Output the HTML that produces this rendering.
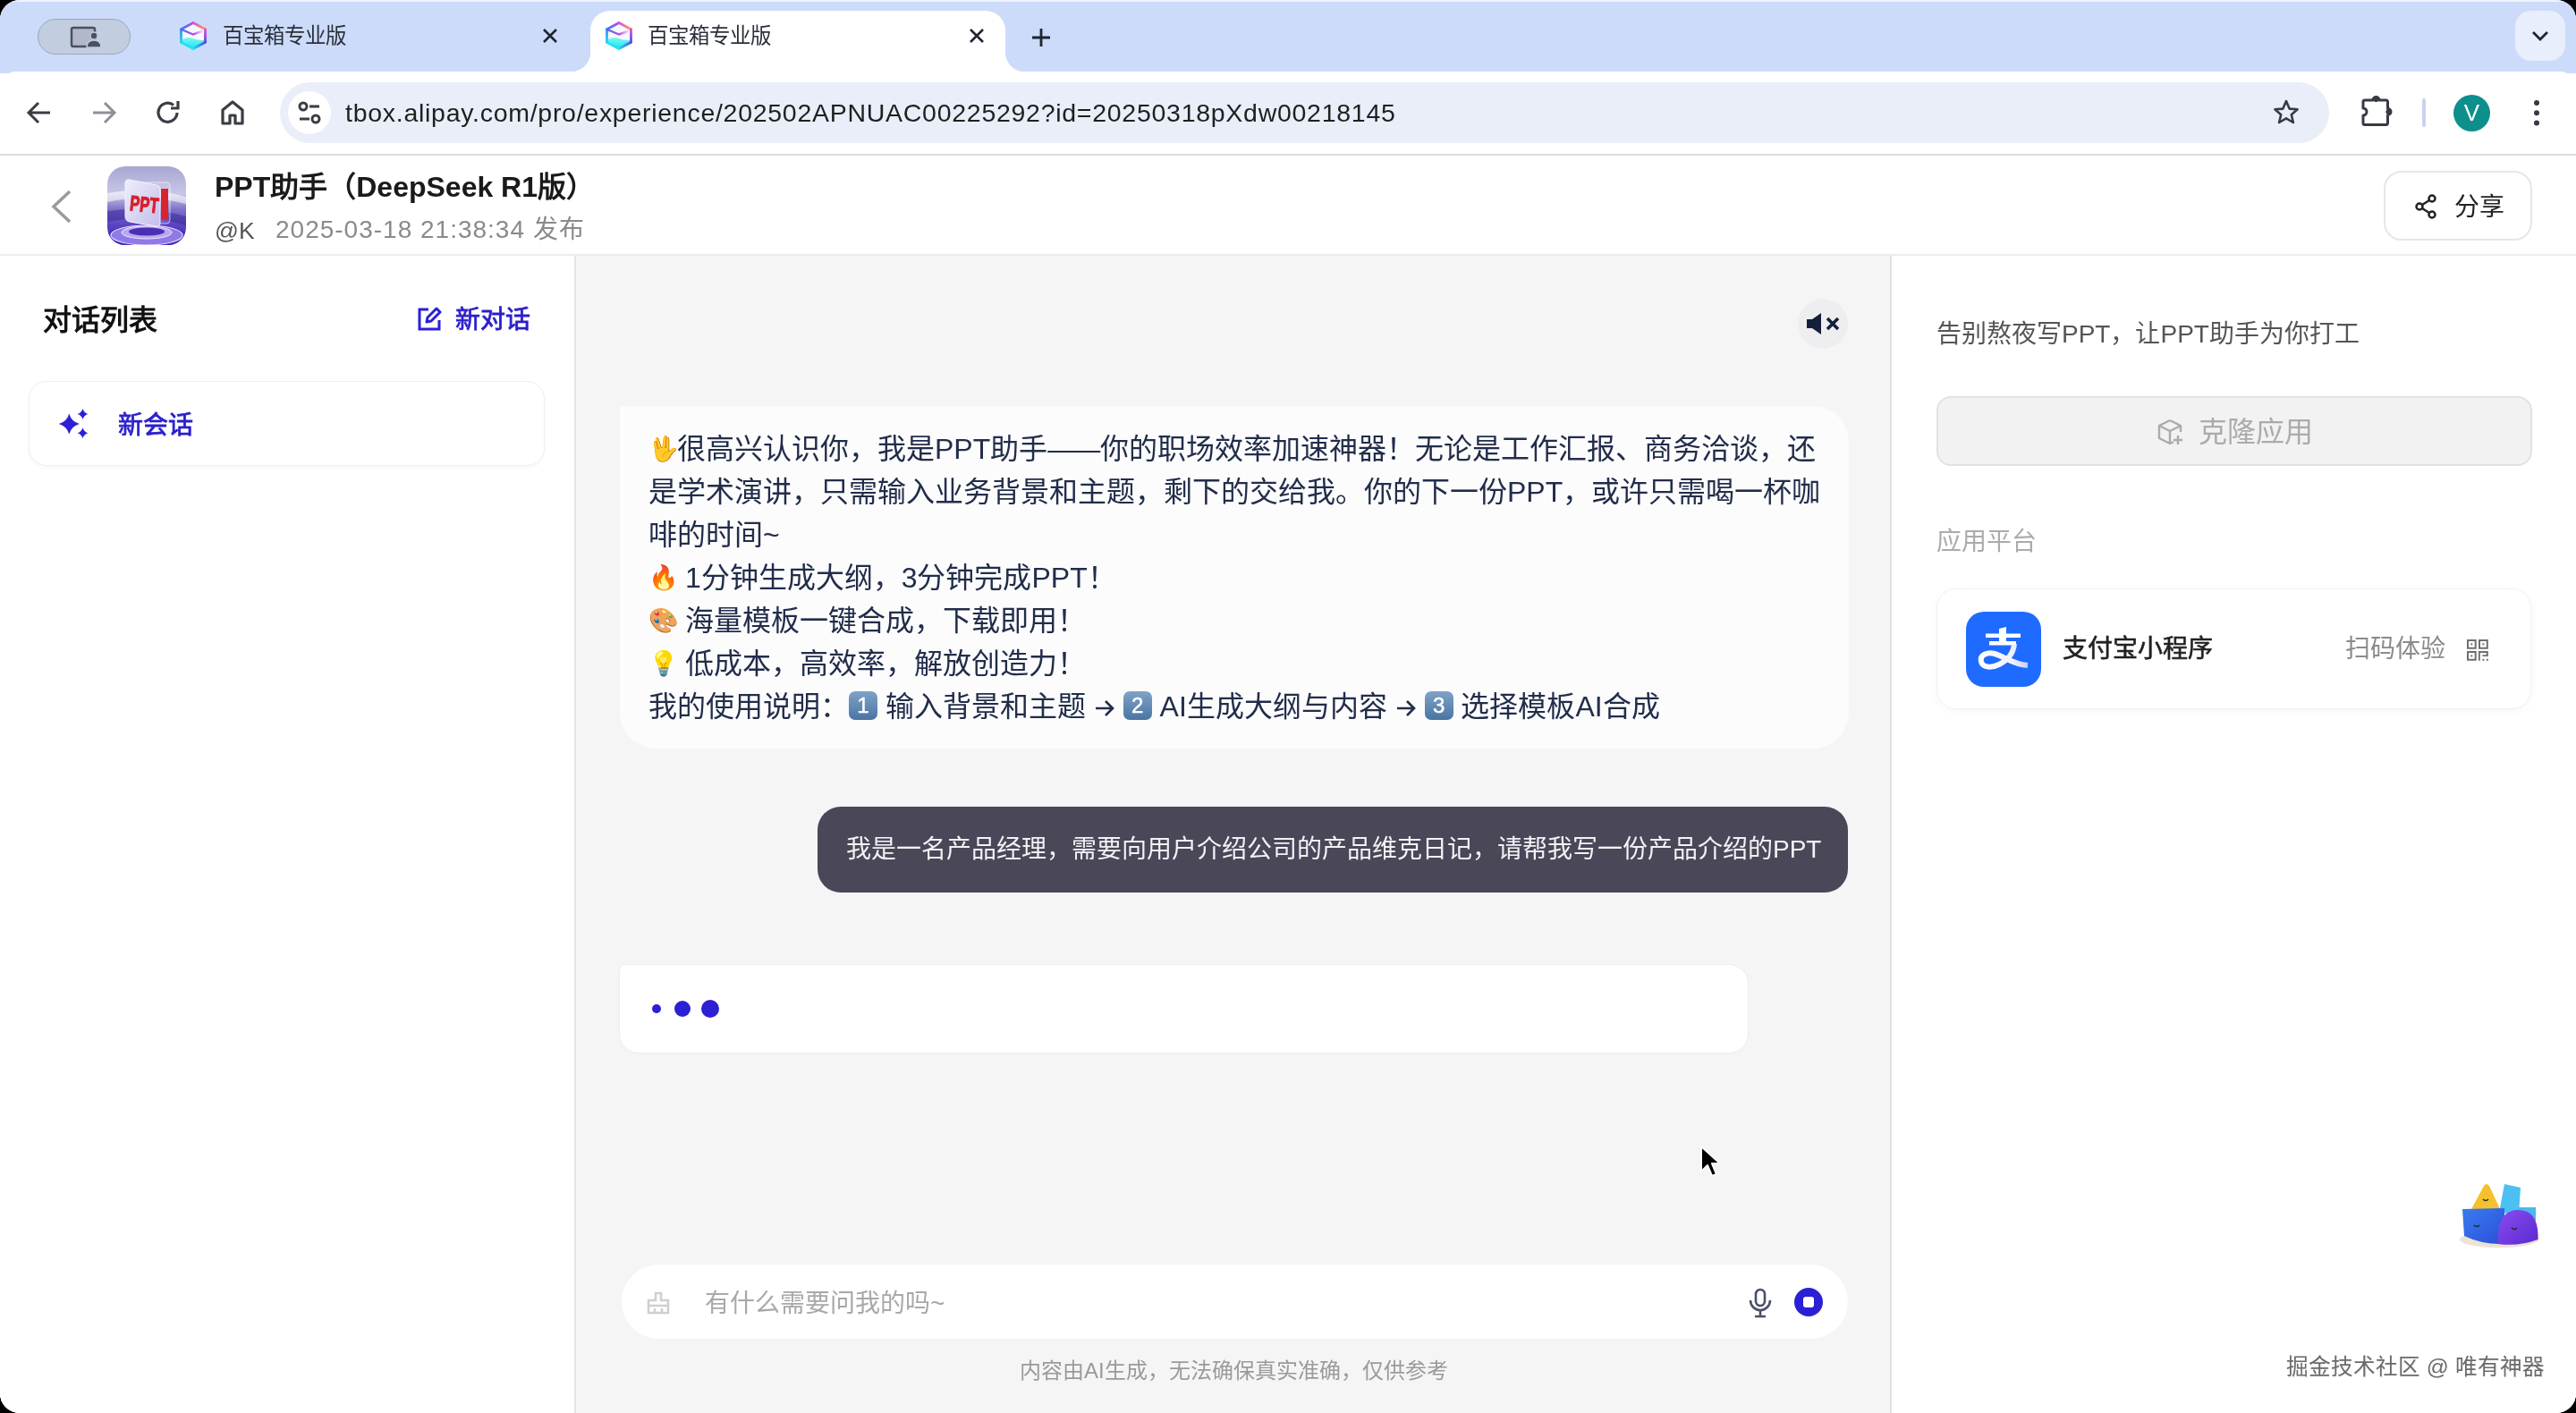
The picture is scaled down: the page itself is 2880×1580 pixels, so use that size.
<!DOCTYPE html>
<html lang="zh-CN"><head><meta charset="utf-8">
<style>
*{box-sizing:border-box;margin:0;padding:0}
html,body{width:2880px;height:1580px;overflow:hidden;background:#000}
body{font-family:"Liberation Sans",sans-serif;position:relative}
.a{position:absolute}
#win{will-change:transform;position:absolute;left:0;top:0;width:2880px;height:1580px;border-radius:22px;overflow:hidden;background:#fff}
#tabbar{position:absolute;left:0;top:0;width:2880px;height:82px;background:#cddbfa;border-top:2px solid #eef3fd}
#toolbar{position:absolute;left:0;top:80px;width:2880px;height:94px;background:#fff;border-radius:18px 18px 0 0;border-bottom:2px solid #dcdcdc}
.tabtxt{font-size:23.5px;color:#2a2f3a;white-space:nowrap;line-height:24px}
#page{position:absolute;left:0;top:174px;width:2880px;height:1406px;background:#fff}
#header{position:absolute;left:0;top:0;width:2880px;height:112px;border-bottom:2px solid #ececec;background:#fff}
#side{position:absolute;left:0;top:112px;width:644px;height:1294px;background:#fff;border-right:2px solid #e4e4e4}
#chat{position:absolute;left:644px;top:112px;width:1471px;height:1294px;background:#f5f5f5;border-right:2px solid #e0e0e0}
#right{position:absolute;left:2116px;top:112px;width:764px;height:1294px;background:#fff}
.em{font-size:27px;display:inline-block;width:32px;text-align:center;vertical-align:top}
.dash{letter-spacing:-5px;margin-right:5px}
.kc{display:inline-block;width:32px;height:32px;border-radius:7px;background:linear-gradient(180deg,#7fa3c8,#4a74a2);color:#fff;font-size:24px;line-height:32px;text-align:center;-webkit-text-stroke:0.5px #fff;vertical-align:4px}
.ar{vertical-align:-1px}
</style></head><body>
<div id="win">
  <div id="tabbar">
    <!-- profile pill -->
    <div class="a" style="left:42px;top:19px;width:104px;height:40px;border-radius:20px;background:#c3cde0;border:1.5px solid #9aa6bb"></div>
    <svg class="a" style="left:78px;top:27px" width="36" height="26" viewBox="0 0 36 26">
      <rect x="2" y="2" width="26" height="21" rx="2" fill="#b0b8c9" stroke="#4a5060" stroke-width="2.5"/>
      <circle cx="27" cy="11" r="4" fill="#4a5060" stroke="#c3cde0" stroke-width="1.5"/>
      <path d="M19 24 Q19 16 27 16 Q35 16 35 24 Z" fill="#4a5060" stroke="#c3cde0" stroke-width="1.5"/>
    </svg>
    <!-- tab 1 -->
    <svg class="a" style="left:200px;top:22px" width="32" height="32" viewBox="0 0 32 32"><defs>
      <linearGradient id="e1" gradientUnits="userSpaceOnUse" x1="2" y1="8.5" x2="16" y2="1"><stop offset="0" stop-color="#3f7cf0"/><stop offset="1" stop-color="#b34ce8"/></linearGradient>
      <linearGradient id="e2" gradientUnits="userSpaceOnUse" x1="16" y1="1" x2="30" y2="8.5"><stop offset="0" stop-color="#d84ce6"/><stop offset="1" stop-color="#ffa23a"/></linearGradient>
      <linearGradient id="e3" gradientUnits="userSpaceOnUse" x1="30" y1="8.5" x2="30" y2="23.5"><stop offset="0" stop-color="#e84cd8"/><stop offset="1" stop-color="#4a4ee6"/></linearGradient>
      <linearGradient id="e4" gradientUnits="userSpaceOnUse" x1="30" y1="23.5" x2="16" y2="31"><stop offset="0" stop-color="#4a4ee6"/><stop offset="1" stop-color="#18dcf2"/></linearGradient>
      <linearGradient id="e5" gradientUnits="userSpaceOnUse" x1="2" y1="8.5" x2="2" y2="23.5"><stop offset="0" stop-color="#3a8af0"/><stop offset="1" stop-color="#22d8f0"/></linearGradient>
      <linearGradient id="vl" gradientUnits="userSpaceOnUse" x1="2" y1="8" x2="27" y2="11"><stop offset="0" stop-color="#3f6ff0"/><stop offset=".6" stop-color="#b84ce8"/><stop offset="1" stop-color="#ffe0f0"/></linearGradient>
      <linearGradient id="cy" x1="0" y1="0" x2="0" y2="1"><stop offset="0" stop-color="#7ff8f0"/><stop offset="1" stop-color="#18e2f4"/></linearGradient>
    </defs>
      <path d="M16 1.5L30 9V23L16 30.5L2 23V9Z" fill="#f6f8ff"/>
      <path d="M2 21Q9 16 16 19Q23 22 30 20.5V23L16 30.5L2 23Z" fill="url(#cy)"/>
      <g fill="none" stroke-width="2.8" stroke-linecap="round">
        <path d="M2.5 8.8L16 1.6" stroke="url(#e1)"/><path d="M16 1.6L29.5 8.8" stroke="url(#e2)"/><path d="M29.5 8.8V23.2" stroke="url(#e3)"/>
        <path d="M29.5 23.2L16 30.4" stroke="url(#e4)"/><path d="M16 30.4L2.5 23.2" stroke="#1ee4ee"/><path d="M2.5 8.8V23.2" stroke="url(#e5)"/>
        <path d="M3 9L16 14.5L26 11" stroke="url(#vl)" stroke-width="2.4"/>
      </g>
    </svg>
    <div class="a tabtxt" style="left:249px;top:26px">百宝箱专业版</div>
    <svg class="a" style="left:605px;top:28px" width="20" height="20" viewBox="0 0 20 20"><path d="M3 3L17 17M17 3L3 17" stroke="#1f2430" stroke-width="2.6"/></svg>
    <!-- active tab -->
    <div class="a" style="left:660px;top:10px;width:464px;height:72px;background:#fff;border-radius:22px 22px 0 0"></div>
    <div class="a" style="left:638px;top:56px;width:22px;height:22px;background:radial-gradient(circle at 0 0,transparent 22px,#fff 22.5px)"></div>
    <div class="a" style="left:1124px;top:56px;width:22px;height:22px;background:radial-gradient(circle at 100% 0,transparent 22px,#fff 22.5px)"></div>
    <svg class="a" style="left:676px;top:22px" width="32" height="32" viewBox="0 0 32 32">
      <path d="M16 1.5L30 9V23L16 30.5L2 23V9Z" fill="#f6f8ff"/>
      <path d="M2 21Q9 16 16 19Q23 22 30 20.5V23L16 30.5L2 23Z" fill="url(#cy)"/>
      <g fill="none" stroke-width="2.8" stroke-linecap="round">
        <path d="M2.5 8.8L16 1.6" stroke="url(#e1)"/><path d="M16 1.6L29.5 8.8" stroke="url(#e2)"/><path d="M29.5 8.8V23.2" stroke="url(#e3)"/>
        <path d="M29.5 23.2L16 30.4" stroke="url(#e4)"/><path d="M16 30.4L2.5 23.2" stroke="#1ee4ee"/><path d="M2.5 8.8V23.2" stroke="url(#e5)"/>
        <path d="M3 9L16 14.5L26 11" stroke="url(#vl)" stroke-width="2.4"/>
      </g>
    </svg>
    <div class="a tabtxt" style="left:724px;top:26px">百宝箱专业版</div>
    <svg class="a" style="left:1082px;top:28px" width="20" height="20" viewBox="0 0 20 20"><path d="M3 3L17 17M17 3L3 17" stroke="#1f2430" stroke-width="2.6"/></svg>
    <svg class="a" style="left:1152px;top:28px" width="24" height="24" viewBox="0 0 24 24"><path d="M12 2V22M2 12H22" stroke="#1f2430" stroke-width="2.8"/></svg>
    <!-- dropdown -->
    <div class="a" style="left:2812px;top:10px;width:56px;height:56px;border-radius:18px;background:#e8eefc"></div>
    <svg class="a" style="left:2830px;top:30px" width="20" height="16" viewBox="0 0 20 16"><path d="M2 4L10 12L18 4" fill="none" stroke="#1f2430" stroke-width="2.8"/></svg>
  </div>

  <div id="toolbar">
    <!-- back -->
    <svg class="a" style="left:28px;top:30px" width="32" height="32" viewBox="0 0 32 32"><path d="M28 16H5M15 5L4 16L15 27" fill="none" stroke="#3a3d44" stroke-width="3"/></svg>
    <svg class="a" style="left:100px;top:30px" width="32" height="32" viewBox="0 0 32 32"><path d="M4 16H27M17 5L28 16L17 27" fill="none" stroke="#8d9097" stroke-width="3"/></svg>
    <svg class="a" style="left:172px;top:30px" width="32" height="32" viewBox="0 0 32 32"><path d="M26 16A10.5 10.5 0 1 1 22 7.5" fill="none" stroke="#3a3d44" stroke-width="3.2"/><path d="M27 3V11H19" fill="none" stroke="#3a3d44" stroke-width="3.2"/></svg>
    <svg class="a" style="left:244px;top:30px" width="32" height="32" viewBox="0 0 32 32"><path d="M5 28V13L16 4L27 13V28H19V19H13V28Z" fill="none" stroke="#3a3d44" stroke-width="3.2" stroke-linejoin="round"/></svg>
    <!-- address bar -->
    <div class="a" style="left:313px;top:12px;width:2291px;height:68px;border-radius:34px;background:#e9eef8"></div>
    <div class="a" style="left:322px;top:22px;width:48px;height:48px;border-radius:24px;background:#fff"></div>
    <svg class="a" style="left:332px;top:32px" width="28" height="28" viewBox="0 0 28 28"><circle cx="7" cy="7" r="4" fill="none" stroke="#3a3d44" stroke-width="3"/><path d="M14 7H25" stroke="#3a3d44" stroke-width="3"/><circle cx="21" cy="21" r="4" fill="none" stroke="#3a3d44" stroke-width="3"/><path d="M3 21H14" stroke="#3a3d44" stroke-width="3"/></svg>
    <div class="a" style="left:386px;top:28px;font-size:28.5px;line-height:36px;color:#1f1f1f;white-space:nowrap;letter-spacing:0.72px">tbox.alipay.com/pro/experience/202502APNUAC00225292?id=20250318pXdw00218145</div>
    <svg class="a" style="left:2538px;top:28px" width="36" height="36" viewBox="0 0 36 36"><path d="M18 5L21.6 13.6L30.6 14.3L23.8 20.2L25.9 29L18 24.3L10.1 29L12.2 20.2L5.4 14.3L14.4 13.6Z" fill="none" stroke="#363a42" stroke-width="2.6" stroke-linejoin="round"/></svg>
    <svg class="a" style="left:2636px;top:24px" width="44" height="40" viewBox="0 0 44 40"><path d="M8 8H17A3.5 3.5 0 0 1 24 8H31.5Q33.5 8 33.5 10V17.5A3.5 3.5 0 0 1 33.5 24.5V33.5Q33.5 35.5 31.5 35.5H8Q6 35.5 6 33.5V25A4 4 0 0 0 6 17V10Q6 8 8 8Z" fill="none" stroke="#363a42" stroke-width="3" stroke-linejoin="round"/><circle cx="20.5" cy="7.5" r="2.6" fill="#363a42"/><circle cx="34" cy="21" r="2.6" fill="#363a42"/></svg>
    <div class="a" style="left:2708px;top:30px;width:3.5px;height:32px;background:#c7d3f0;border-radius:2px"></div>
    <div class="a" style="left:2743px;top:26px;width:41px;height:41px;border-radius:50%;background:#0e8f8b"></div>
    <div class="a" style="left:2743px;top:26px;width:41px;height:41px;line-height:41px;text-align:center;color:#fff;font-size:26px">V</div>
    <svg class="a" style="left:2828px;top:30px" width="16" height="34" viewBox="0 0 16 34"><circle cx="8" cy="5" r="3" fill="#363a42"/><circle cx="8" cy="16.2" r="3" fill="#363a42"/><circle cx="8" cy="27.4" r="3" fill="#363a42"/></svg>
  </div>

  <div id="page">
    <div id="header">
      <svg class="a" style="left:54px;top:37px" width="28" height="40" viewBox="0 0 28 40"><path d="M24 3L6 20L24 37" fill="none" stroke="#9a9a9a" stroke-width="3.5"/></svg>
      <svg class="a" style="left:120px;top:12px" width="88" height="88" viewBox="0 0 88 88">
        <defs>
          <clipPath id="ic"><rect width="88" height="88" rx="20"/></clipPath>
          <linearGradient id="icbg" x1="0" y1="0" x2="0" y2="1"><stop offset="0" stop-color="#a7a6d2"/><stop offset=".35" stop-color="#c9c7e6"/><stop offset=".55" stop-color="#7d72c8"/><stop offset=".75" stop-color="#5a42c0"/><stop offset="1" stop-color="#3a24a8"/></linearGradient>
          <linearGradient id="glass" x1="0" y1="0" x2="1" y2="1"><stop offset="0" stop-color="#efeefb"/><stop offset="1" stop-color="#c4bdeb"/></linearGradient>
        </defs>
        <g clip-path="url(#ic)">
          <rect width="88" height="88" fill="url(#icbg)"/>
          <path d="M0 30Q44 22 88 34V42Q44 30 0 40Z" fill="#fff" opacity=".55"/>
          <path d="M0 50Q44 44 88 56V66Q44 54 0 62Z" fill="#3c2a9c" opacity=".55"/>
          <ellipse cx="44" cy="82" rx="50" ry="16" fill="#4a2fc0"/>
          <ellipse cx="44" cy="77" rx="40" ry="11" fill="#8f7ae6" stroke="#e9e0ff" stroke-width="1.2"/>
          <ellipse cx="44" cy="74" rx="28" ry="7" fill="#b9a8f2" stroke="#f0e8ff" stroke-width="1"/>
          <ellipse cx="44" cy="73" rx="20" ry="4.5" fill="#4a2fb5"/>
          <rect x="36" y="18" width="34" height="46" rx="4" fill="#fff" fill-opacity=".12" stroke="#fff" stroke-opacity=".6" stroke-width="1"/>
          <path d="M20 19Q20 14 25 15L55 21Q59 22 59 26V63Q59 68 54 67L25 62Q20 61 20 56Z" fill="url(#glass)" stroke="#f4f2ff" stroke-width="1"/>
          <rect x="60" y="25" width="8" height="34" fill="#d9232f"/>
          <text x="0" y="0" font-size="25" font-weight="bold" fill="#d81e2c" stroke="#d81e2c" stroke-width="1.2" font-family="Liberation Sans" transform="translate(24.5 49) rotate(6) scale(0.66 0.95)">PPT</text>
        </g>
      </svg>
      <div class="a" style="left:240px;top:15px;font-size:32px;line-height:40px;font-weight:bold;color:#1a1a1a;white-space:nowrap">PPT助手（DeepSeek R1版）</div>
      <div class="a" style="left:240px;top:66px;font-size:26.5px;line-height:36px;color:#555;white-space:nowrap">@K</div>
      <div class="a" style="left:308px;top:65px;font-size:28px;line-height:36px;color:#8a8a8a;letter-spacing:1px;white-space:nowrap">2025-03-18 21:38:34 发布</div>
      <div class="a" style="left:2665px;top:17px;width:166px;height:78px;border:2px solid #e6e6e6;border-radius:20px;background:#fff"></div>
      <svg class="a" style="left:2700px;top:43px" width="26" height="28" viewBox="0 0 26 28"><circle cx="19" cy="5" r="3.5" fill="none" stroke="#222" stroke-width="2.5"/><circle cx="5" cy="14" r="3.5" fill="none" stroke="#222" stroke-width="2.5"/><circle cx="19" cy="23" r="3.5" fill="none" stroke="#222" stroke-width="2.5"/><path d="M8 12L16 7M8 16L16 21" stroke="#222" stroke-width="2.5"/></svg>
      <div class="a" style="left:2744px;top:40px;font-size:28px;line-height:36px;color:#222;white-space:nowrap">分享</div>
    </div>

    <div id="side">
      <div class="a" style="left:48px;top:52px;font-size:32px;line-height:40px;font-weight:bold;color:#111;white-space:nowrap">对话列表</div>
      <svg class="a" style="left:466px;top:57px" width="28" height="28" viewBox="0 0 28 28"><path d="M13 3H3V25H25V15" fill="none" stroke="#2b20d4" stroke-width="3"/><path d="M11 17L12 12L22 2L26 6L16 16Z" fill="none" stroke="#2b20d4" stroke-width="3" stroke-linejoin="round"/></svg>
      <div class="a" style="left:509px;top:52px;font-size:28px;line-height:40px;-webkit-text-stroke:0.8px #2a1fcc;color:#2a1fcc;white-space:nowrap">新对话</div>
      <div class="a" style="left:32px;top:140px;width:577px;height:95px;border-radius:20px;background:#fff;border:1.5px solid #efefef;box-shadow:0 2px 4px rgba(0,0,0,0.035)"></div>
      <svg class="a" style="left:64px;top:169px" width="38" height="38" viewBox="0 0 38 38"><path d="M13.3 7.5Q15.83 16.47 24.8 19Q15.83 21.53 13.3 30.5Q10.770000000000001 21.53 1.8000000000000007 19Q10.770000000000001 16.47 13.3 7.5Z M28.5 2Q29.82 6.68 34.5 8Q29.82 9.32 28.5 14Q27.18 9.32 22.5 8Q27.18 6.68 28.5 2Z M28.5 23.3Q29.82 27.98 34.5 29.3Q29.82 30.62 28.5 35.3Q27.18 30.62 22.5 29.3Q27.18 27.98 28.5 23.3Z" fill="#2b20d4"/></svg>
      <div class="a" style="left:132px;top:170px;font-size:28px;line-height:40px;-webkit-text-stroke:0.8px #2a1fcc;color:#2a1fcc;white-space:nowrap">新会话</div>
    </div>

    <div id="chat">
      <div class="a" style="left:1366px;top:48px;width:56px;height:56px;border-radius:50%;background:#eeeef0"></div>
      <svg class="a" style="left:1374px;top:62px" width="40" height="28" viewBox="0 0 40 28"><path d="M2 9H8L18 2V26L8 19H2Z" fill="#14203a"/><path d="M25 8L37 20M37 8L25 20" stroke="#14203a" stroke-width="3.6"/></svg>

      <div class="a" style="left:49px;top:168px;width:1374px;height:383px;border-radius:4px 40px 40px 40px;background:#fcfcfd"></div>
      <div class="a" id="bot" style="left:81px;top:192px;width:1340px;font-size:32px;line-height:48px;color:#222d4a;white-space:nowrap">
        <div><span class="em">🖖</span>很高兴认识你，我是PPT助手<span class="dash">——</span>你的职场效率加速神器！无论是工作汇报、商务洽谈，还</div>
        <div>是学术演讲，只需输入业务背景和主题，剩下的交给我。你的下一份PPT，或许只需喝一杯咖</div>
        <div>啡的时间~</div>
        <div><span class="em">🔥</span> 1分钟生成大纲，3分钟完成PPT！</div>
        <div><span class="em">🎨</span> 海量模板一键合成，下载即用！</div>
        <div><span class="em">💡</span> 低成本，高效率，解放创造力！</div>
        <div>我的使用说明：<span class="kc">1</span> 输入背景和主题 <svg class="ar" width="24" height="20" viewBox="0 0 24 20"><path d="M2 10H21M13 2L21 10L13 18" fill="none" stroke="#222d4a" stroke-width="2.6"/></svg> <span class="kc">2</span> AI生成大纲与内容 <svg class="ar" width="24" height="20" viewBox="0 0 24 20"><path d="M2 10H21M13 2L21 10L13 18" fill="none" stroke="#222d4a" stroke-width="2.6"/></svg> <span class="kc">3</span> 选择模板AI合成</div>
      </div>

      <div class="a" style="left:270px;top:616px;width:1152px;height:96px;border-radius:26px;background:#4a4759"></div>
      <div class="a" style="left:302px;top:644px;font-size:28px;line-height:40px;color:#f2f2f5;white-space:nowrap">我是一名产品经理，需要向用户介绍公司的产品维克日记，请帮我写一份产品介绍的PPT</div>

      <div class="a" style="left:48px;top:792px;width:1263px;height:100px;border-radius:8px 22px 22px 22px;background:#fff;border:1.5px solid #eeeeee"></div>
      <div class="a" style="left:85px;top:837px;width:10px;height:10px;border-radius:50%;background:#2b20d4"></div>
      <div class="a" style="left:110px;top:833px;width:18px;height:18px;border-radius:50%;background:#2b20d4"></div>
      <div class="a" style="left:140px;top:832px;width:20px;height:20px;border-radius:50%;background:#2b20d4"></div>

      <!-- cursor -->
      <svg class="a" style="left:1256px;top:994px" width="26" height="38" viewBox="0 0 26 38"><path d="M2 2V30L9 23L14 35L19 33L14 21H23Z" fill="#000" stroke="#fff" stroke-width="2" stroke-linejoin="round"/></svg>

      <div class="a" style="left:51px;top:1128px;width:1371px;height:83px;border-radius:42px;background:#fff"></div>
      <svg class="a" style="left:78px;top:1157px" width="28" height="28" viewBox="0 0 28 28"><path d="M11 3H17V11H25V25H3V11H11Z" fill="none" stroke="#cfcfcf" stroke-width="2.5"/><path d="M3 17H25M10 25V20M18 25V20" stroke="#cfcfcf" stroke-width="2.5"/></svg>
      <div class="a" style="left:144px;top:1152px;font-size:28px;line-height:40px;color:#a8a8a8;white-space:nowrap">有什么需要问我的吗~</div>
      <svg class="a" style="left:1310px;top:1154px" width="28" height="34" viewBox="0 0 28 34"><rect x="9" y="2" width="10" height="18" rx="5" fill="none" stroke="#4a5068" stroke-width="2.6"/><path d="M3 14A11 11 0 0 0 25 14M14 25V32M8 32H20" fill="none" stroke="#4a5068" stroke-width="2.6"/></svg>
      <div class="a" style="left:1362px;top:1154px;width:32px;height:32px;border-radius:50%;background:#2b20d4"></div>
      <div class="a" style="left:1372px;top:1164px;width:12px;height:12px;border-radius:3px;background:#fff"></div>

      <div class="a" style="left:496px;top:1231px;font-size:24px;line-height:32px;color:#9a9a9a;white-space:nowrap">内容由AI生成，无法确保真实准确，仅供参考</div>
    </div>

    <div id="right">
      <div class="a" style="left:49px;top:68px;font-size:28px;line-height:40px;color:#555;white-space:nowrap">告别熬夜写PPT，让PPT助手为你打工</div>
      <div class="a" style="left:49px;top:157px;width:666px;height:78px;border-radius:16px;background:#f2f2f2;border:2px solid #e2e2e2"></div>
      <svg class="a" style="left:296px;top:182px" width="30" height="30" viewBox="0 0 30 30"><path d="M14 2L26 8V15M14 2L2 8V22L14 28L18 26M2 8L14 14L26 8M14 14V28" fill="none" stroke="#ababab" stroke-width="2.4" stroke-linejoin="round"/><path d="M23 19V29M18 24H28" stroke="#ababab" stroke-width="2.4"/></svg>
      <div class="a" style="left:342px;top:177px;font-size:32px;line-height:40px;color:#ababab;white-space:nowrap">克隆应用</div>

      <div class="a" style="left:49px;top:300px;font-size:28px;line-height:40px;color:#ababab;white-space:nowrap">应用平台</div>
      <div class="a" style="left:49px;top:372px;width:665px;height:135px;border-radius:22px;background:#fff;border:1.5px solid #f2f2f2;box-shadow:0 2px 10px rgba(0,0,0,0.04)"></div>
      <svg class="a" style="left:82px;top:398px" width="84" height="84" viewBox="0 0 84 84">
        <defs><linearGradient id="rib" x1="0" y1="0" x2="1" y2="0"><stop offset="0" stop-color="#fff"/><stop offset=".7" stop-color="#eef0ff"/><stop offset="1" stop-color="#c9cdf5"/></linearGradient></defs>
        <rect x="0" y="0" width="84" height="84" rx="20" fill="#1f6bff"/>
        <rect x="22" y="24.5" width="39" height="4.5" fill="#fff"/>
        <path d="M37 19L45 17V35H37Z" fill="#fff"/>
        <rect x="26" y="33" width="30" height="4.5" fill="#fff"/>
        <path d="M54 36C53 47 47 54 37 59C29 63 19 63 17 56C15 48 24 45 32 47C43 50 52 59 69 60" fill="none" stroke="url(#rib)" stroke-width="6" stroke-linecap="butt"/>
      </svg>
      <div class="a" style="left:190px;top:420px;font-size:28px;line-height:40px;-webkit-text-stroke:0.6px #222;color:#222;white-space:nowrap">支付宝小程序</div>
      <div class="a" style="left:506px;top:420px;font-size:28px;line-height:40px;color:#8a8a8a;white-space:nowrap">扫码体验</div>
      <svg class="a" style="left:642px;top:429px" width="24" height="24" viewBox="0 0 24 24" fill="#6f6f6f">
        <path d="M0 0H10.7V10.7H0ZM2 2V8.7H8.7V2Z" fill-rule="evenodd"/><rect x="4.3" y="4.3" width="2" height="2"/>
        <path d="M13 0H23.8V10.7H13ZM15 2V8.7H21.8V2Z" fill-rule="evenodd"/><rect x="17.4" y="4.3" width="2" height="2"/>
        <path d="M0 13H10.7V23.8H0ZM2 15V21.8H8.7V15Z" fill-rule="evenodd"/><rect x="4.3" y="17.4" width="2" height="2"/>
        <path d="M13 13H23.8V19H17.4V17.2H21.8V15H14.8V23.8H13Z"/><rect x="17.4" y="21.8" width="2" height="2"/><rect x="21.8" y="21.8" width="2" height="2"/>
      </svg>

      <!-- mascot -->
      <svg class="a" style="left:630px;top:1034px" width="96" height="80" viewBox="0 0 96 80">
        <defs>
          <linearGradient id="mb" x1="0" y1="0" x2="1" y2="1"><stop offset="0" stop-color="#3a7cf0"/><stop offset="1" stop-color="#2a4fd8"/></linearGradient>
          <linearGradient id="mp" x1="0" y1="0" x2="1" y2="1"><stop offset="0" stop-color="#8a4cf0"/><stop offset="1" stop-color="#5a2ad0"/></linearGradient>
        </defs>
        <ellipse cx="48" cy="66" rx="45" ry="10" fill="#ece2d6" stroke="#fff" stroke-width="1.5"/>
        <path d="M16 34L31 6Q34 2 37 6L50 34Z" fill="#f4c02e"/>
        <path d="M54 4L72 8L70 38L48 36Z" fill="#4cc0f2"/>
        <rect x="69" y="30" width="20" height="15" fill="#49b8ee"/>
        <path d="M7 32L54 31L54 71Q30 72 9 62Z" fill="url(#mb)"/>
        <path d="M47 71Q45 33 69 33Q93 33 91.5 66Q70 74 47 71Z" fill="url(#mp)"/>
        <path d="M30 21q3 3 6 0M20 50q3 3 6 0M62 53q3 3 6 0" fill="none" stroke="#222" stroke-width="1.2"/>
      </svg>
      <div class="a" style="left:440px;top:1226px;font-size:24.6px;line-height:34px;color:#6a6a6a;white-space:nowrap;text-shadow:1px 1px 1px #fff,1px 1px 0 #ddd">掘金技术社区 @ 唯有神器</div>
    </div>
  </div>
</div>
</body></html>
